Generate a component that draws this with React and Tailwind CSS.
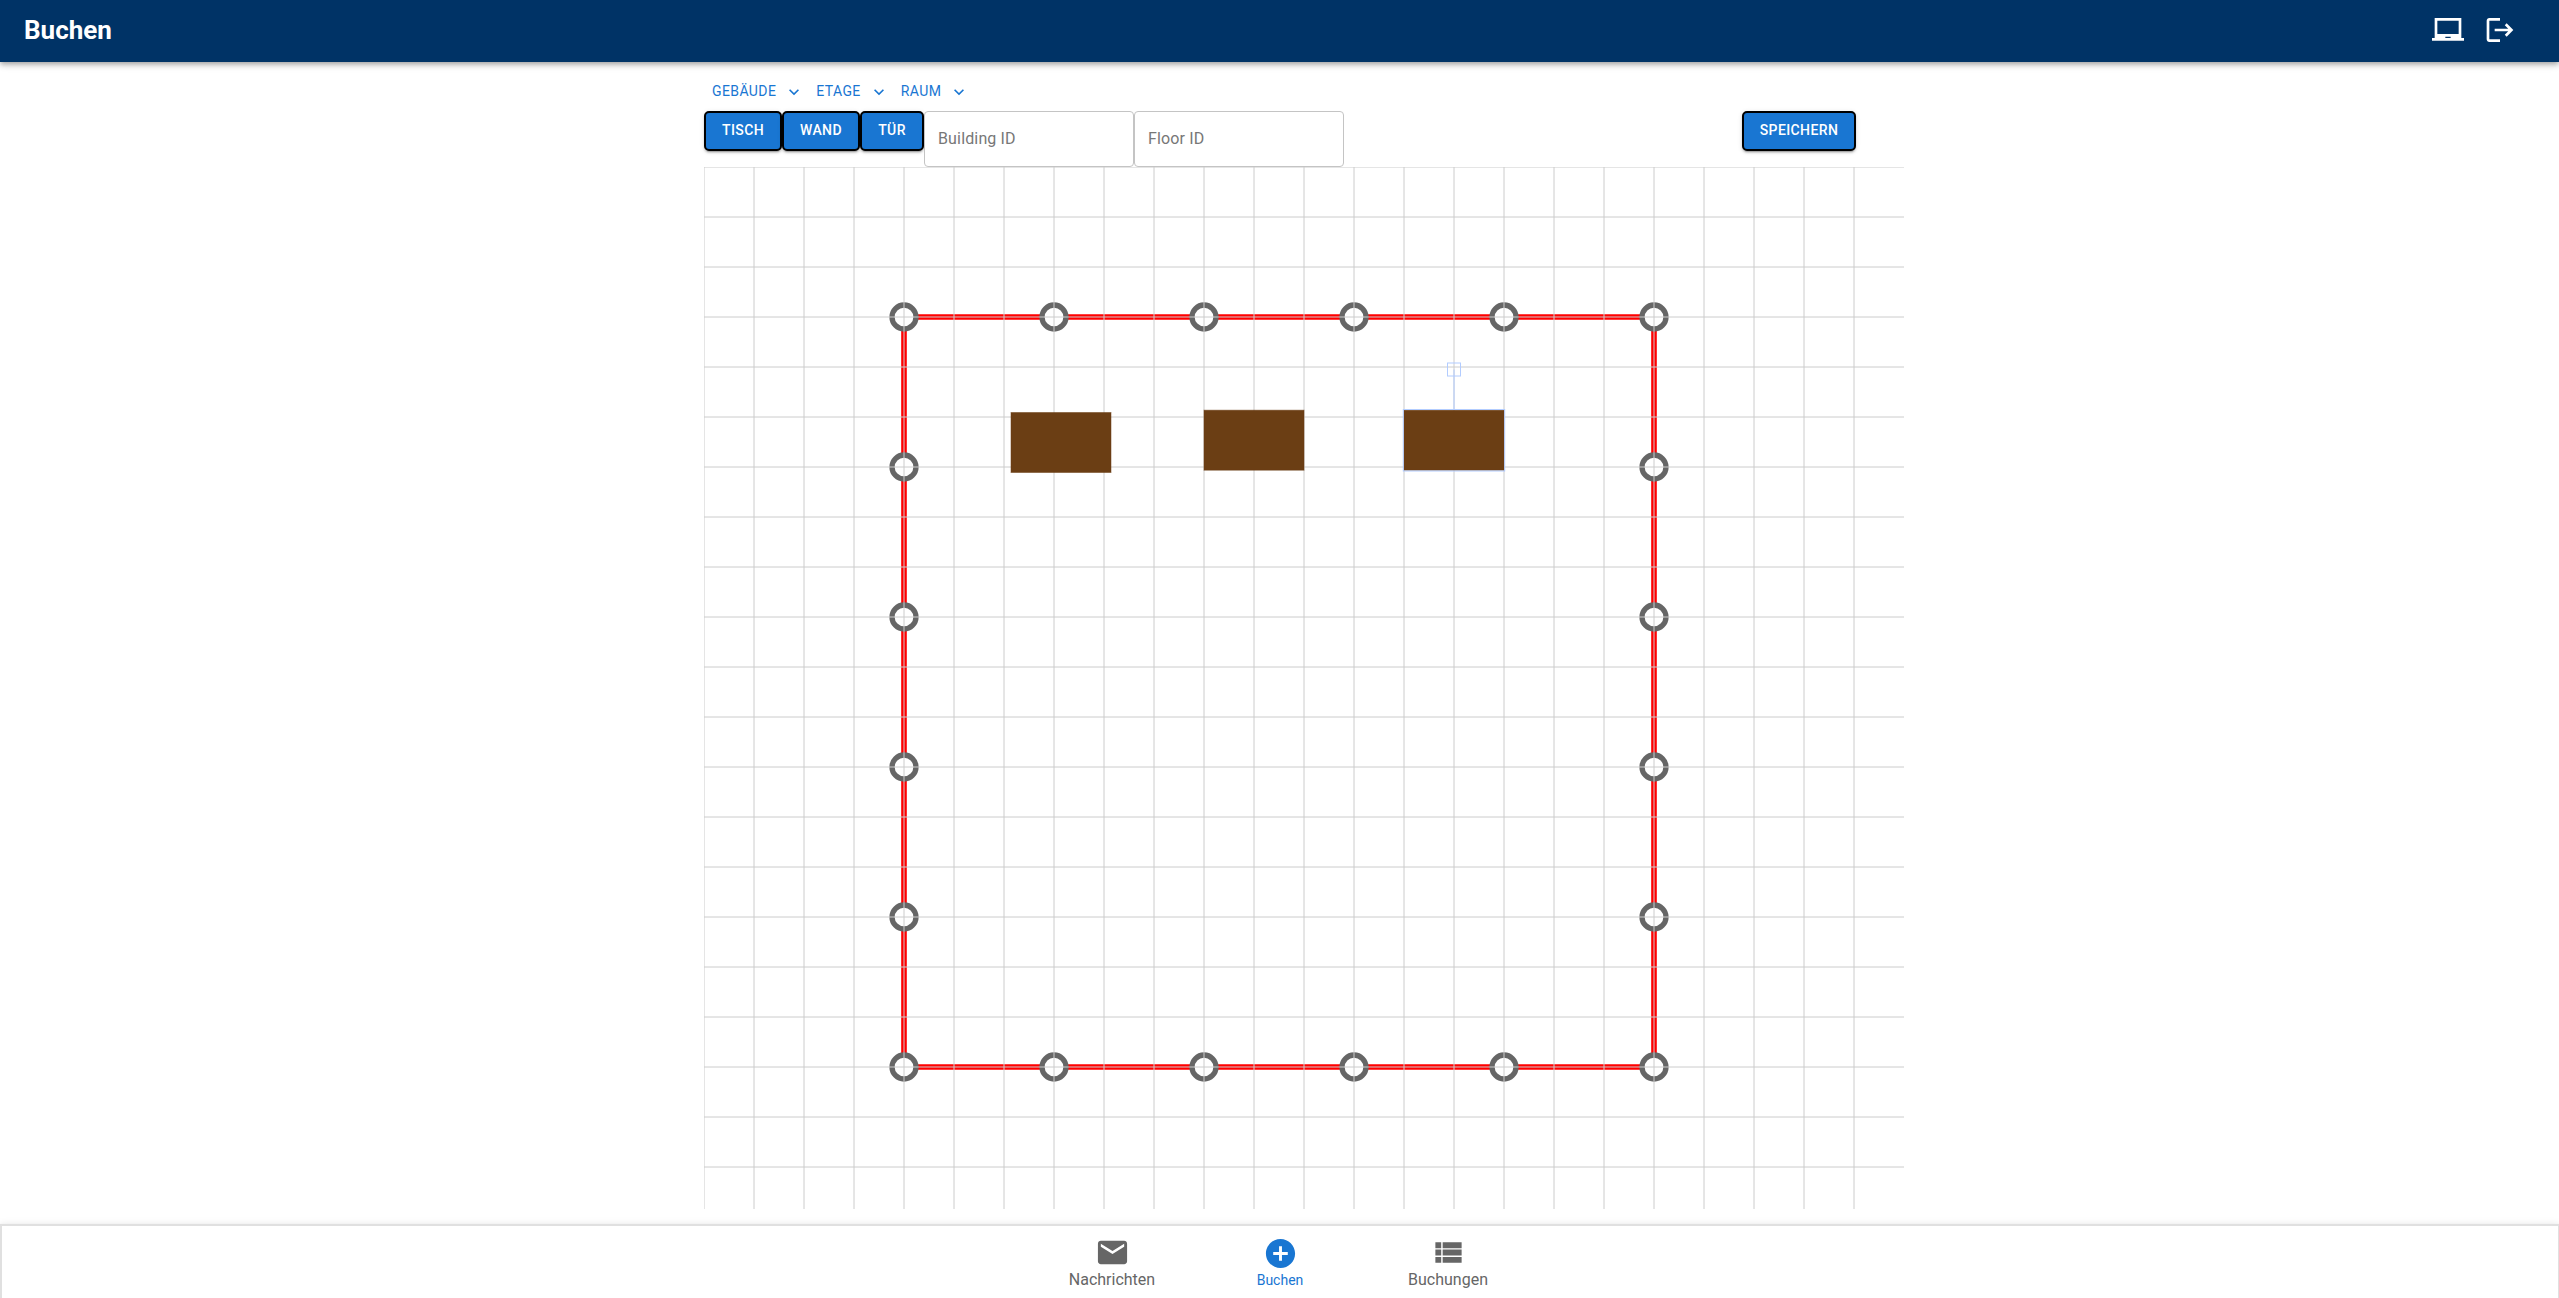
import React from "react";

const GRID = 50;
const WIDTH = 1200;
const HEIGHT = 1042;
const columns = Array.from({ length: 24 }, (_, i) => i * GRID);
const rows = Array.from({ length: 21 }, (_, i) => i * GRID);
const steps = [0, 1, 2, 3, 4, 5];
const nodes = [
  ...steps.map((i) => [200 + i * 150, 150]),
  ...steps.map((i) => [200 + i * 150, 900]),
  ...steps.slice(1, 5).map((i) => [200, 150 + i * 150]),
  ...steps.slice(1, 5).map((i) => [950, 150 + i * 150]),
];
const desks = [
  [307, 245.5],
  [500, 243.2],
  [700, 243.2],
];

function Icon({ d, className }) {
  return (
    <svg viewBox="0 0 24 24" fill="currentColor" className={className}>
      <path d={d} />
    </svg>
  );
}

function Dropdown({ label, className }) {
  return (
    <button className={`flex items-center text-[14px] leading-6 text-[#1976d2] ${className}`}>
      <span className="tracking-[0.4px]">{label}</span>
      <svg viewBox="0 0 24 24" className="ml-2 mt-px size-5" fill="currentColor">
        <path d="M7.41 8.59 12 13.17l4.59-4.58L18 10l-6 6-6-6 1.41-1.41z" />
      </svg>
    </button>
  );
}

function ActionButton({ label, className }) {
  return (
    <button
      className={`h-10 rounded-[5px] border-2 border-black bg-[#1976d2] pb-0.5 text-center text-[14px] font-medium leading-6 tracking-[0.4px] text-white shadow-[0_3px_1px_-2px_rgba(0,0,0,0.2),0_2px_2px_0_rgba(0,0,0,0.14),0_1px_5px_0_rgba(0,0,0,0.12)] ${className}`}
    >
      {label}
    </button>
  );
}

function Field({ placeholder }) {
  return (
    <input
      placeholder={placeholder}
      className="h-14 w-[210px] rounded border border-[#c4c4c4] bg-white px-[13px] pb-0.5 text-[16px] tracking-[0.15px] placeholder:text-[#777777]"
    />
  );
}

function FloorPlan() {
  return (
    <svg width={WIDTH} height={HEIGHT} viewBox={`0 0 ${WIDTH} ${HEIGHT}`} className="block">
      <path fill="none" stroke="#ff0000" strokeWidth="5.6" d="M200 150H950V900H200Z" />
      {nodes.map(([x, y]) => (
        <circle key={`${x}-${y}`} cx={x} cy={y} r="12" fill="#fff" stroke="#666" strokeWidth="5.3" />
      ))}
      <g stroke="#ccc" strokeWidth="1">
        {columns.map((x) => (
          <line key={x} x1={x} x2={x} y1="0" y2={HEIGHT} />
        ))}
        {rows.map((y) => (
          <line key={y} x1="0" x2={WIDTH} y1={y} y2={y} />
        ))}
      </g>
      {desks.map(([x, y]) => (
        <rect key={x} x={x} y={y} width="100" height="60" fill="#6b3e14" stroke="#6b3e14" strokeOpacity="0.5" strokeWidth="1" />
      ))}
      <g fill="none" stroke="#b2ccff" strokeWidth="1">
        <rect x="699.3" y="242.5" width="101.4" height="61.5" />
        <path d="M750 242.5V202.5" />
        <rect x="743.5" y="196" width="13" height="13" />
      </g>
    </svg>
  );
}

function NavItem({ label, d, active }) {
  return (
    <button
      className={`flex w-[168px] flex-col items-center ${active ? "pt-px text-[#1976d2]" : "text-[#666666]"}`}
    >
      <Icon d={d} className="size-[35px]" />
      <span className={active ? "-mt-px text-[14px] leading-5" : "text-[16px] leading-5"}>{label}</span>
    </button>
  );
}

export default function App() {
  return (
    <div className="flex h-[1298px] flex-col overflow-hidden bg-white font-[Roboto,sans-serif]">
      <header className="relative flex h-[62px] shrink-0 items-center justify-between bg-[#003366] pb-0.5 pl-6 pr-[43px] text-white shadow-[0_2px_4px_-1px_rgba(0,0,0,0.2),0_4px_5px_0_rgba(0,0,0,0.14),0_1px_10px_0_rgba(0,0,0,0.12)]">
        <h1 className="-mt-px text-[26px] font-bold leading-8">Buchen</h1>
        <div className="flex items-center gap-5">
          <Icon
            className="size-8"
            d="M22 18V3H2v15H0v2h24v-2h-2zm-8 0h-4v-1h4v1zm6-3H4V5h16v10z"
          />
          <Icon
            className="size-8"
            d="m17 7-1.41 1.41L18.17 11H8v2h10.17l-2.58 2.58L17 17l5-5zM4 5h8V3H4c-1.1 0-2 .9-2 2v14c0 1.1.9 2 2 2h8v-2H4z"
          />
        </div>
      </header>
      <main className="ml-[704px] w-[1200px] grow pt-[17px]">
        <div className="flex h-8 pl-2">
          <Dropdown label="GEBÄUDE" className="mr-3 h-6" />
          <Dropdown label="ETAGE" className="mr-3 h-6" />
          <Dropdown label="RAUM" className="h-6" />
        </div>
        <div className="flex h-14 w-[1152px] items-start">
          <ActionButton label="TISCH" className="w-[78px]" />
          <ActionButton label="WAND" className="w-[78px]" />
          <ActionButton label="TÜR" className="w-16" />
          <Field placeholder="Building ID" />
          <Field placeholder="Floor ID" />
          <ActionButton label="SPEICHERN" className="ml-auto w-[114px]" />
        </div>
        <FloorPlan />
      </main>
      <nav className="relative -mr-px flex h-[74px] shrink-0 justify-center border-2 border-b-0 border-[#e0e0e0] bg-white pt-[9px] shadow-[0_3px_3px_-2px_rgba(0,0,0,0.2),0_3px_4px_0_rgba(0,0,0,0.14),0_1px_8px_0_rgba(0,0,0,0.12)]">
        <NavItem
          label="Nachrichten"
          d="M20 4H4c-1.1 0-1.99.9-1.99 2L2 18c0 1.1.9 2 2 2h16c1.1 0 2-.9 2-2V6c0-1.1-.9-2-2-2zm0 4-8 5-8-5V6l8 5 8-5v2z"
        />
        <NavItem
          label="Buchen"
          active
          d="M12 2C6.48 2 2 6.48 2 12s4.48 10 10 10 10-4.48 10-10S17.52 2 12 2zm5 11h-4v4h-2v-4H7v-2h4V7h2v4h4v2z"
        />
        <NavItem
          label="Buchungen"
          d="M3 14h4v-4H3v4zm0 5h4v-4H3v4zM3 9h4V5H3v4zm5 5h13v-4H8v4zm0 5h13v-4H8v4zM8 5v4h13V5H8z"
        />
      </nav>
    </div>
  );
}
